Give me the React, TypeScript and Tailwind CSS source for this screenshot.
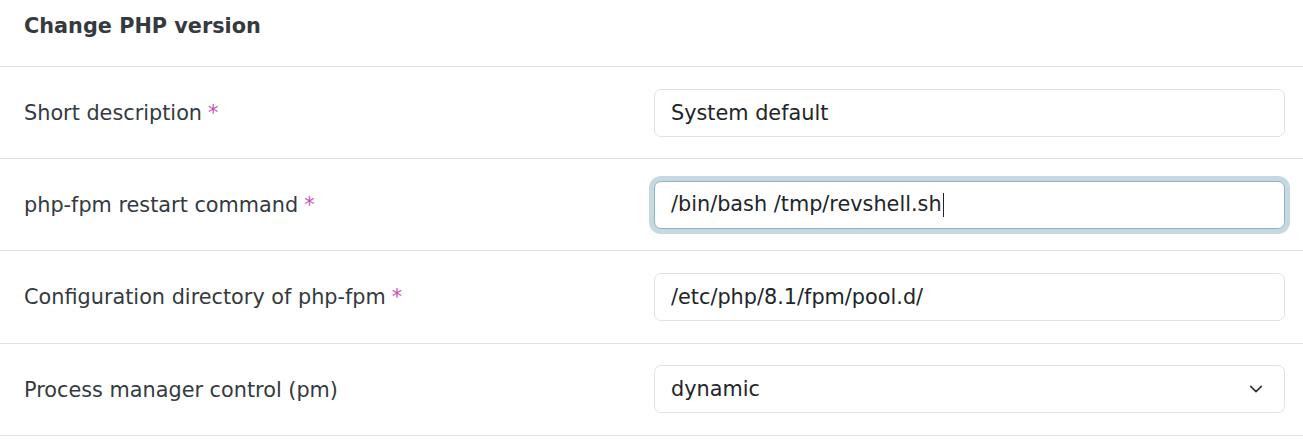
import React from 'react';

interface Field {
  label: string;
  value: string;
  required?: boolean;
  focused?: boolean;
  select?: boolean;
}

const fields: Field[] = [
  { label: 'Short description', value: 'System default', required: true },
  { label: 'php-fpm restart command', value: '/bin/bash /tmp/revshell.sh', required: true, focused: true },
  { label: 'Configuration directory of php-fpm', value: '/etc/php/8.1/fpm/pool.d/', required: true },
  { label: 'Process manager control (pm)', value: 'dynamic', select: true },
];

const ChevronDown = () => (
  <svg width="14" height="14" viewBox="0 0 16 16" fill="none">
    <path d="M2 5l6 6 6-6" stroke="#343a40" strokeWidth="2" strokeLinecap="round" strokeLinejoin="round" />
  </svg>
);

const FieldControl: React.FC<{ field: Field }> = ({ field }) => {
  if (field.select) {
    return (
      <div className="flex h-[48px] w-full items-center justify-between rounded-[7px] border border-[#dee2e6] bg-white pl-[16px] pr-[21px]">
        <span className="text-[#212529]">{field.value}</span>
        <ChevronDown />
      </div>
    );
  }

  if (field.focused) {
    return (
      <div className="flex h-[48px] w-full items-center rounded-[7px] border border-[#8fb4c1] bg-white pl-[16px] ring-[5px] ring-[#c5d9e0]">
        <span className="text-[#212529]">{field.value}</span>
        <span className="ml-[1px] h-[24px] w-[1.5px] bg-[#212529]"></span>
      </div>
    );
  }

  return (
    <input
      type="text"
      readOnly
      defaultValue={field.value}
      className="h-[48px] w-full rounded-[7px] border border-[#dee2e6] bg-white pl-[16px] text-[#212529] outline-none"
    />
  );
};

export default function App() {
  return (
    <div className="min-h-[443px] bg-white font-['DejaVu_Sans',sans-serif] text-[20.8px] text-[#343a40]">
      {/* Card header */}
      <div className="h-[67px] border-b border-[#dee2e6] px-6 pt-[11px]">
        <h2 className="font-bold leading-[31px] text-[#343a40]">Change PHP version</h2>
      </div>

      {/* Form rows */}
      {fields.map((field) => (
        <div
          key={field.label}
          className="grid grid-cols-[1fr_631px] items-center border-b border-[#dee2e6] py-[21.6px] pl-6 pr-[18px]"
        >
          <label className="pt-[2px]">
            {field.label}
            {field.required && <span className="ml-[6px] text-[#c94fb8]">*</span>}
          </label>
          <FieldControl field={field} />
        </div>
      ))}
    </div>
  );
}
